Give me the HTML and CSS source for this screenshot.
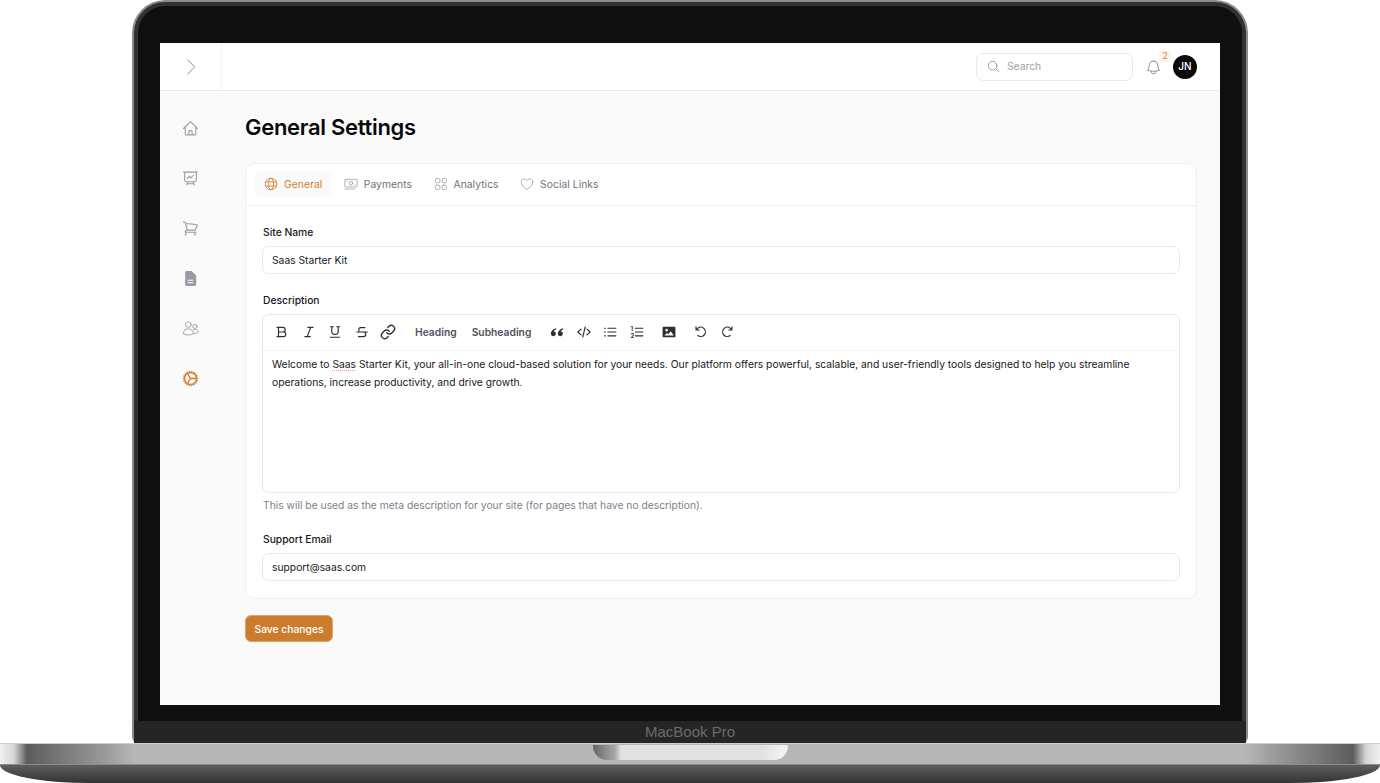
FILE: index.html
```html
<!DOCTYPE html>
<html lang="en">
<head>
<meta charset="utf-8">
<title>General Settings</title>
<link rel="stylesheet" href="styles.css">
</head>
<body>
<div class="laptop">
  <div class="lid">
    <div class="bezel">
      <div class="screen">
        <header class="topbar">
          <div class="toggle-cell">
            <svg class="ic toggle" viewBox="0 0 24 24"><path d="M8 3.500 16.500 12 8 20.500"/></svg>
          </div>
          <div class="topbar-right">
            <div class="search">
              <svg class="ic search-ic" viewBox="0 0 24 24"><circle cx="10.500" cy="10.500" r="8"/><path d="m16.500 16.500 5.500 5.500"/></svg>
              <span>Search</span>
            </div>
            <div class="bell">
              <svg class="ic bell-ic" viewBox="0 0 24 24"><path d="M14.857 17.082a23.848 23.848 0 0 0 5.454-1.310A8.967 8.967 0 0 1 18 9.750V9A6 6 0 0 0 6 9v.750a8.967 8.967 0 0 1-2.312 6.022c1.733.640 3.560 1.085 5.455 1.310m5.714 0a24.255 24.255 0 0 1-5.714 0m5.714 0a3 3 0 1 1-5.714 0"/></svg>
              <span class="badge">2</span>
            </div>
            <div class="avatar">JN</div>
          </div>
        </header>
        <div class="workspace">
          <nav class="sidebar">
            <svg class="ic nav-ic" viewBox="0 0 24 24"><path d="m2.250 12 8.954-8.955a1.126 1.126 0 0 1 1.591 0L21.750 12M4.500 9.750v10.125c0 .621.504 1.125 1.125 1.125H9.750v-4.875c0-.621.504-1.125 1.125-1.125h2.250c.621 0 1.125.504 1.125 1.125V21h4.125c.621 0 1.125-.504 1.125-1.125V9.750M8.250 21h8.250"/></svg>
            <svg class="ic nav-ic" viewBox="0 0 24 24"><path d="M3.750 3v11.250A2.250 2.250 0 0 0 6 16.500h2.250M3.750 3h-1.500m1.500 0h16.500m0 0h1.500m-1.500 0v11.250A2.250 2.250 0 0 1 18 16.500h-2.250m-7.500 0h7.500m-7.500 0-1 3m8.500-3 1 3m0 0 .5 1.500m-.5-1.500h-9.500m0 0-.5 1.500m.750-9 3-3 2.148 2.148A12.061 12.061 0 0 1 16.500 7.605"/></svg>
            <svg class="ic nav-ic" viewBox="0 0 24 24"><path d="M2.250 3h1.386c.510 0 .955.343 1.087.835l.383 1.437M7.500 14.250a3 3 0 0 0-3 3h15.750m-12.750-3h11.218c1.121-2.300 2.100-4.684 2.924-7.138a60.114 60.114 0 0 0-16.536-1.840M7.500 14.250 5.106 5.272M6 20.250a.75.75 0 1 1-1.500 0 .75.75 0 0 1 1.500 0Zm12.750 0a.75.75 0 1 1-1.500 0 .75.75 0 0 1 1.500 0Z"/></svg>
            <svg class="nav-ic doc" viewBox="0 0 24 24"><path class="doc-fill" d="M6.500 1.500h6.800a1 1 0 0 1 .7.3l5.700 5.700a1 1 0 0 1 .3.7v12.300a2 2 0 0 1-2 2h-11.500a2 2 0 0 1-2-2v-17a2 2 0 0 1 2-2Z"/><path class="doc-line" d="M8 14.500h8M8 18h8"/></svg>
            <svg class="ic nav-ic people" viewBox="0 0 24 24"><circle cx="9" cy="6.500" r="4"/><circle cx="18" cy="9" r="3"/><path d="M2 18.500c0-3.500 3-6 7-6 3.800 0 7 2.500 7 6 0 1.800-3.200 2.500-7 2.500s-7-.7-7-2.500Z"/><path d="M15.500 14c1-.7 2-1 3-1 2.500 0 4 1.700 4 4 0 1.300-1.500 2-3.500 2h-3"/></svg>
            <svg class="ic nav-ic active" viewBox="0 0 24 24"><path d="M4.500 12a7.500 7.500 0 0 0 15 0m-15 0a7.500 7.500 0 1 1 15 0m-15 0H3m16.500 0H21m-1.500 0H12m-8.457 3.077 1.410-.513m14.095-5.130 1.410-.513M5.106 17.785l1.150-.964m11.490-9.642 1.149-.964M7.501 19.795l.750-1.300m7.500-12.990.750-1.300m-6.063 16.658.260-1.477m2.605-14.772.260-1.477m0 17.726-.260-1.477M10.698 4.614l-.260-1.477M16.500 19.794l-.750-1.299M7.500 4.205 12 12m6.894 5.785-1.149-.964M6.256 7.178l-1.150-.964m15.352 8.864-1.410-.513M4.954 9.435l-1.410-.514M12.002 12l-3.750 6.495"/></svg>
          </nav>
          <main class="content">
            <h1>General Settings</h1>
            <section class="card">
              <div class="tabs">
                <div class="tab selected">
                  <svg class="ic tab-ic" viewBox="0 0 24 24"><circle cx="12" cy="12" r="10"/><ellipse cx="12" cy="12" rx="4.500" ry="10"/><path d="M3 8.500h18M3 15.500h18"/></svg>
                  <span>General</span>
                </div>
                <div class="tab">
                  <svg class="ic tab-ic" viewBox="0 0 24 24"><rect x="1.500" y="4" width="21" height="13" rx="1"/><circle cx="12" cy="10.500" r="3"/><path d="M5 7.500h.5M18.500 13.500h.5M1.500 20.500h17"/></svg>
                  <span>Payments</span>
                </div>
                <div class="tab">
                  <svg class="ic tab-ic" viewBox="0 0 24 24"><rect x="2.500" y="2.500" width="7.500" height="7.500" rx="2"/><rect x="14" y="2.500" width="7.500" height="7.500" rx="2"/><rect x="2.500" y="14" width="7.500" height="7.500" rx="2"/><rect x="14" y="14" width="7.500" height="7.500" rx="2"/></svg>
                  <span>Analytics</span>
                </div>
                <div class="tab">
                  <svg class="ic tab-ic" viewBox="0 0 24 24"><path d="M22 8.250c0-2.800-2.300-5-5.200-5-2.100 0-3.900 1.200-4.800 3-.9-1.800-2.700-3-4.800-3C4.300 3.250 2 5.450 2 8.250c0 7.800 10 13 10 13s10-5.200 10-13Z"/></svg>
                  <span>Social Links</span>
                </div>
              </div>
              <form class="form">
                <label class="label" for="site">Site Name</label>
                <input class="input" id="site" type="text" value="Saas Starter Kit">
                <div class="label spaced">Description</div>
                <div class="editor">
                  <div class="toolbar">
                    <svg class="tool" viewBox="0 0 24 24"><path d="M6 4h7.500a4 4 0 0 1 0 8H6zM6 12h8.500a4 4 0 0 1 0 8H6zM3.500 4H6M3.500 20H6"/></svg>
                    <svg class="tool" viewBox="0 0 24 24"><path d="M19 4h-9M14 20H5M15 4 9 20"/></svg>
                    <svg class="tool" viewBox="0 0 24 24"><path d="M6.500 3v7.500a5.500 5.500 0 0 0 11 0V3M4 3h5M15 3h5M4 21h16"/></svg>
                    <svg class="tool" viewBox="0 0 24 24"><path d="M17 4.500H10a3.500 3.500 0 0 0-3 5.500M14.500 12a4 4 0 0 1 0 8H6M3 12h18"/></svg>
                    <svg class="tool link" viewBox="0 0 24 24"><path d="M10 13a5 5 0 0 0 7.540.540l3-3a5 5 0 0 0-7.070-7.070l-1.720 1.710M14 11a5 5 0 0 0-7.540-.540l-3 3a5 5 0 0 0 7.070 7.070l1.710-1.710"/></svg>
                    <span class="tool-text first">Heading</span>
                    <span class="tool-text">Subheading</span>
                    <svg class="tool solid quote" viewBox="0 0 24 24"><path d="M10.500 5.500C6 6.500 1.500 10 1.500 14.800a4.300 4.300 0 1 0 4.700-4.300c.8-1.300 2.400-2.200 4.300-2.800ZM22.500 5.500c-4.500 1-9 4.500-9 9.300a4.300 4.300 0 1 0 4.700-4.300c.8-1.300 2.400-2.200 4.300-2.800Z"/></svg>
                    <svg class="tool" viewBox="0 0 24 24"><path d="M7 7l-5.500 5L7 17M17 7l5.500 5-5.500 5M14 3.500 10 20.500"/></svg>
                    <svg class="tool" viewBox="0 0 24 24"><path d="M8.500 5.500H22M8.500 12H22M8.500 18.500H22M2.500 5.500h1.500M2.500 12h1.500M2.500 18.500h1.500"/></svg>
                    <svg class="tool" viewBox="0 0 24 24"><text class="num" x="1" y="10">1</text><text class="num" x="1" y="22">2</text><path d="M9 5.500h13M9 12h13M9 18.500h13"/></svg>
                    <svg class="tool solid image" viewBox="0 0 24 24"><path fill-rule="evenodd" d="M2.500 3h19A1.500 1.500 0 0 1 23 4.500v15a1.500 1.500 0 0 1-1.500 1.500h-19A1.500 1.500 0 0 1 1 19.500v-15A1.500 1.500 0 0 1 2.500 3Zm1.500 15h16l-5-7.500-4 5.500-2.500-2.500Zm4-7a2.200 2.200 0 1 0 0-4.400 2.200 2.200 0 0 0 0 4.400Z"/></svg>
                    <svg class="tool undo" viewBox="0 0 24 24"><path d="M3.500 8.500h5.500M3.500 3v5.500l2.800-2.800A8 8 0 1 1 6.500 18"/></svg>
                    <svg class="tool" viewBox="0 0 24 24"><path d="M20.500 8.500H15M20.500 3v5.500l-2.800-2.800A8 8 0 1 0 17.500 18"/></svg>
                  </div>
                  <div class="editor-body">Welcome to <span class="squiggle">Saas</span> Starter Kit, your all-in-one cloud-based solution for your needs. Our platform offers powerful, scalable, and user-friendly tools designed to help you streamline operations, increase productivity, and drive growth.</div>
                </div>
                <p class="help">This will be used as the meta description for your site (for pages that have no description).</p>
                <label class="label spaced" for="email">Support Email</label>
                <input class="input" id="email" type="text" value="support@saas.com">
              </form>
            </section>
            <button class="save" type="button">Save changes</button>
          </main>
        </div>
      </div>
    </div>
    <div class="chin">MacBook Pro</div>
  </div>
  <div class="base">
    <div class="notch"></div>
  </div>
  <div class="foot"></div>
</div>
</body>
</html>
```
FILE: styles.css
```css
* { box-sizing: border-box; }
html, body { margin: 0; padding: 0; background: #fff; overflow: hidden; }
body { font-family: Inter, "Liberation Sans", sans-serif; color: #111; }

.laptop { width: 1380px; height: 783px; display: flex; flex-direction: column; align-items: stretch; }

.lid {
  width: 1116px; height: 743px; margin: 0 auto; flex: none;
  border: 2px solid #8b8b8b; border-bottom: 0;
  border-radius: 33px 33px 6px 6px;
  background: #323232; padding: 4px 4px 0;
  display: flex; flex-direction: column;
}
.bezel {
  flex: none; height: 715px; background: #0f0f0f;
  border-radius: 27px 27px 0 0;
  padding: 37px 22px 16px;
}
.screen { width: 1060px; height: 662px; background: #fafafa; display: flex; flex-direction: column; overflow: hidden; }
.chin {
  margin: 0 -4px; flex: none; height: 22px; background: #252525;
  color: #6c6c6c; font: 15px/21px "Liberation Sans", sans-serif; text-align: center;
}

.base {
  flex: none; height: 22px; position: relative; display: flex; justify-content: center;
  border-top: 1px solid #d0d0d0; border-bottom: 1px solid #8c8c8c;
  background: linear-gradient(90deg, #f2f2f2 0, #d5d5d5 14px, #5c5c5c 27px, #777 60px, #9a9a9a 105px, #b7b7b7 135px, #b7b7b7 1245px, #9a9a9a 1275px, #777 1320px, #5c5c5c 1353px, #d5d5d5 1366px, #f2f2f2 1380px);
}
.notch {
  width: 195px; height: 15px; margin-top: 1px;
  border-radius: 0 0 14px 14px;
  background: linear-gradient(90deg, #666 0, #a8a8a8 22px, #e2e2e2 28px, #e2e2e2 170px, #f4f4f4 190px, #eee 195px);
}
.foot {
  flex: none; height: 18px;
  border-radius: 0 0 90px 90px / 0 0 18px 18px;
  background: linear-gradient(180deg, #5e5e5e 0, #333 100%);
}

.ic { fill: none; stroke: currentColor; stroke-width: 1.5; stroke-linecap: round; stroke-linejoin: round; flex: none; }

.topbar { flex: none; height: 48px; background: #fff; border-bottom: 1px solid #eaeaec; display: flex; justify-content: space-between; }
.toggle-cell { width: 62px; border-right: 1px solid #f4f4f5; display: flex; align-items: center; justify-content: center; color: #8b8b93; }
.toggle { width: 20px; height: 20px; stroke-width: 1.2; }
.topbar-right { display: flex; align-items: center; padding-right: 23px; }
.search {
  width: 157px; height: 28px; border: 1px solid #eaeaec; border-radius: 7px;
  display: flex; align-items: center; gap: 7px; padding: 0 0 2px 10px;
  color: #a1a1aa; font-size: 10.300px;
}
.search-ic { width: 13px; height: 13px; color: #8b8b93; margin-top: 2px; }
.bell { position: relative; width: 16px; height: 16px; margin-left: 12px; color: #9a9aa2; }
.bell-ic { width: 17px; height: 17px; display: block; }
.badge {
  position: absolute; right: -10px; top: -9px; width: 12px; height: 12px; border-radius: 4px;
  background: #fdf4e7; color: #d07f2e; font-size: 8.500px; line-height: 12px; text-align: center;
}
.avatar {
  width: 24px; height: 24px; border-radius: 50%; margin-left: 12px;
  background: #0a0a0a; color: #fff; font-size: 10px; font-weight: 500; line-height: 23px; text-align: center;
}

.workspace { flex: 1; display: flex; min-height: 0; }
.sidebar { flex: none; width: 61px; display: flex; flex-direction: column; align-items: center; gap: 33px; padding-top: 29px; color: #9a9aa2; }
.nav-ic { width: 17px; height: 17px; flex: none; }
.people { stroke-width: 1.2; }
.nav-ic.active { color: #cf7d2f; width: 19px; height: 19px; margin: -1px 0; stroke-width: 1.7; }
.doc-fill { fill: #9a9aa2; }
.doc-line { stroke: #fff; stroke-width: 1.6; fill: none; }

.content { flex: 1; padding: 21px 23px 0 24px; min-width: 0; }
h1 { margin: 0 0 21px; font-size: 22px; line-height: 30px; font-weight: 600; letter-spacing: -0.3px; color: #09090b; }

.card { background: #fff; border: 1px solid #eeeeef; border-radius: 10px; height: 436px; }
.tabs { height: 42px; border-bottom: 1px solid #eeeeef; display: flex; align-items: center; gap: 2.500px; padding: 0 0 1px 8px; }
.tab {
  height: 26px; display: flex; align-items: center; gap: 6px; padding: 0 9px 0 10px;
  border-radius: 7px; font-size: 10.300px; font-weight: 400; color: #71717a; letter-spacing: .05px;
}
.tab.selected { background: #fafafa; color: #d08033; }
.tab-ic { width: 14px; height: 14px; color: #a1a1aa; stroke-width: 1.4; }
.selected .tab-ic { color: #d08033; }

.form { padding: 18px 16px 0 16px; }
.label { display: block; padding-left: 1px; margin-bottom: 6px; font-size: 10.300px; font-weight: 500; line-height: 16px; color: #18181b; }
.label.spaced { margin-top: 18px; }
.input {
  display: block; width: 918px; height: 28px; padding: 0 9px;
  border: 1px solid #e8e8ea; border-radius: 7px; outline: 0; background: #fff;
  font: 400 10.300px Inter, sans-serif; color: #18181b;
}
.editor { width: 918px; height: 179px; border: 1px solid #e8e8ea; border-radius: 7px; }
.toolbar { height: 36px; border-bottom: 1px solid #f6f6f7; display: flex; align-items: center; padding: 0 0 2px 12px; gap: 12.500px; color: #2e2e33; }
.tool { width: 14px; height: 14px; flex: none; fill: none; stroke: currentColor; stroke-width: 2; stroke-linecap: round; stroke-linejoin: round; }
.tool.solid { fill: currentColor; stroke: none; }
.link { width: 16px; height: 16px; margin: 0 -1px; }
.quote { margin-left: 6.500px; }
.image { margin-left: 5.500px; }
.undo { margin-left: 5.500px; }
.num { font: 700 10px Inter, sans-serif; fill: currentColor; stroke: none; }
.tool-text { font-size: 10.300px; font-weight: 600; color: #52525b; }
.tool-text.first { margin-left: 7.500px; margin-right: 2.500px; }
.editor-body { padding: 4px 9px 0; font-size: 10.300px; line-height: 18px; color: #18181b; }
.squiggle { text-decoration: underline dotted #e79a9a 1px; text-underline-offset: 2px; }
.help { margin: 4px 0 0 1px; font-size: 10.300px; line-height: 16px; color: #80808a; }

.save {
  display: block; margin-top: 16px; width: 88px; height: 27px; padding: 1px 0 0;
  border: 1px solid #e0a468; border-radius: 6px; background: #cc7c2e;
  color: #fff; font: 500 10.300px Inter, sans-serif;
}
```
